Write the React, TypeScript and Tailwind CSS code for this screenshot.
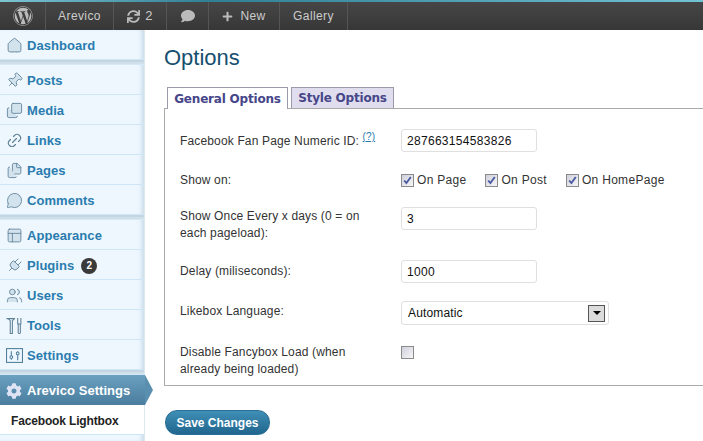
import React from 'react';
import { FaWordpress, FaSync, FaComment, FaPlus, FaCog } from 'react-icons/fa';
import { Home, Pin, Images, Link2, Files, MessageCircle, PanelsTopLeft, Plug, Users } from 'lucide-react';

const Tools: React.FC = () => (
    <svg width="17" height="17" viewBox="0 0 16 16" fill="none" stroke="#5f8197" strokeWidth="1">
        <path d="M0.5 1.5h8M2 1.5l2 2v12h2v-12l2-2" />
        <path d="M11 1v5M14 1v5M10.5 6.5h4M11.5 7v7.5a1 1 0 0 0 2 0V7" />
    </svg>
);

const SettingsIcon: React.FC = () => (
    <svg width="17" height="17" viewBox="0 0 16 16" fill="none" stroke="#4f7f9c" strokeWidth="1">
        <rect x="0.5" y="1.5" width="15" height="13" />
        <path d="M5 4v4.5M5 11v1M11 4v1M11 7.5v5" />
        <circle cx="5" cy="9.5" r="1.3" />
        <circle cx="11" cy="6" r="1.3" />
    </svg>
);

const iconProps = { size: 17, strokeWidth: 1.2, fill: '#d3e3ee' };

const menuGroups = [
    [{ label: 'Dashboard', icon: <Home {...iconProps} /> }],
    [
        { label: 'Posts', icon: <Pin {...iconProps} className="rotate-45" /> },
        { label: 'Media', icon: <Images {...iconProps} /> },
        { label: 'Links', icon: <Link2 size={17} strokeWidth={1.6} className="-rotate-45" /> },
        { label: 'Pages', icon: <Files {...iconProps} /> },
        { label: 'Comments', icon: <MessageCircle {...iconProps} /> },
    ],
    [
        { label: 'Appearance', icon: <PanelsTopLeft {...iconProps} /> },
        { label: 'Plugins', icon: <Plug {...iconProps} className="rotate-45" />, badge: '2' },
        { label: 'Users', icon: <Users {...iconProps} /> },
        { label: 'Tools', icon: <Tools /> },
        { label: 'Settings', icon: <SettingsIcon /> },
    ],
];

const Separator: React.FC = () => (
    <div className="h-[5px] border-t-2 border-b border-t-[#c3d6e2] border-b-[#d5e8f5] bg-[#cfe0eb]" />
);

const Checkbox: React.FC<{ checked?: boolean }> = ({ checked }) => (
    <span className="flex h-[13px] w-[13px] shrink-0 items-center justify-center border border-[#8a8a8a] bg-gradient-to-br from-[#d0d0dc] to-[#f6f6f8]">
        {checked && (
            <svg width="9" height="9" viewBox="0 0 9 9" fill="none" stroke="#4a5aa0" strokeWidth="1.8">
                <path d="M1.2 4.5l2.2 2.6L7.8 1" />
            </svg>
        )}
    </span>
);

const TextInput: React.FC<{ value: string }> = ({ value }) => (
    <div className="flex h-[23px] w-[136px] items-center rounded-[3px] border border-[#dfdfdf] bg-white pl-[5px] text-[12px] tracking-[0.3px] text-[#111]">
        {value}
    </div>
);

const Row: React.FC<{ label: React.ReactNode; className: string; labelClass?: string; children: React.ReactNode }> = ({ label, className, labelClass, children }) => (
    <div className={`flex ${className}`}>
        <div className={`w-[221px] shrink-0 pr-[12px] leading-[17px] text-[#333] ${labelClass ?? ''}`}>{label}</div>
        <div>{children}</div>
    </div>
);

export default function App() {
    return (
        <div className="h-[441px] w-[703px] overflow-hidden bg-white font-['Liberation_Sans',sans-serif] text-[12px] tracking-[0.15px]">
            {/* Admin bar */}
            <div className="h-[2px] bg-gradient-to-r from-[#7cc4d2] via-[#2f7f95] via-30% to-[#6fc3d3]" />
            <div className="h-[28px] bg-gradient-to-b from-[#464646] to-[#373737] text-[12px] tracking-[0.4px] text-[#cccccc]">
                <div className="flex h-full">
                    <div className="flex w-[46px] items-center justify-center border-r border-[#555]">
                        <FaWordpress size={20} className="text-[#bbb]" />
                    </div>
                    <div className="flex w-[68px] items-center justify-center border-r border-[#555]">Arevico</div>
                    <div className="flex w-[53px] items-center justify-center gap-[5px] border-r border-[#555]">
                        <FaSync size={13} className="text-[#bbb]" />
                        <span className="text-[13px]">2</span>
                    </div>
                    <div className="flex w-[42px] items-center justify-center border-r border-[#555]">
                        <FaComment size={14} className="text-[#bbb]" />
                    </div>
                    <div className="flex w-[71px] items-center justify-center gap-[7px] border-r border-[#555]">
                        <FaPlus size={11} className="text-[#bbb]" />
                        <span>New</span>
                    </div>
                    <div className="flex w-[68px] items-center justify-center border-r border-[#555]">Gallery</div>
                </div>
            </div>

            <div className="flex h-[411px]">
                {/* Sidebar */}
                <div className="w-[145px] shrink-0 border-r-[1px] border-[#dce8f0] bg-[#eef7fe] shadow-[inset_-4px_0_4px_-2px_rgba(170,195,215,0.6)]">
                    {menuGroups.map((group, i) => (
                        <div key={i}>
                            {group.map((item) => (
                                <div key={item.label} className="flex h-[30px] items-center gap-[4px] border-b border-[#cfe6f7] pl-[6px] pt-[2px] text-[13px] font-bold tracking-[0.05px] text-[#2a7cae]">
                                    <span className="flex w-[17px] justify-center text-[#5f8197]">{item.icon}</span>
                                    <span>{item.label}</span>
                                    {item.badge && (
                                        <span className="ml-[3px] flex h-[16px] w-[16px] items-center justify-center rounded-full bg-[#3a3a3a] text-[10px] text-white">
                                            {item.badge}
                                        </span>
                                    )}
                                </div>
                            ))}
                            <Separator />
                        </div>
                    ))}
                    <div className="relative flex h-[30px] w-[145px] items-center gap-[5px] bg-gradient-to-b from-[#6aa0c0] to-[#4a7d9e] pl-[6px] pt-[2px] text-[13px] font-bold tracking-[0.05px] text-white">
                        <FaCog size={16} className="text-[#dfe4f5]" />
                        <span>Arevico Settings</span>
                        <span className="absolute left-[145px] top-0 h-0 w-0 border-y-[15px] border-l-[8px] border-y-transparent border-l-[#5a8fb0]" />
                    </div>
                    <div className="flex h-[30px] items-center border-b border-[#cfe6f7] bg-white pl-[11px] pt-[2px] text-[12px] font-bold tracking-[-0.15px] text-[#222]">Facebook Lightbox</div>
                </div>

                {/* Content */}
                <div className="min-w-0 flex-1 pl-[19px]">
                    <h2 className="pt-[13px] text-[22px] leading-[30px] tracking-normal text-[#164f6f]">Options</h2>
                    <div className="mt-[14px] flex h-[21px] items-end gap-[3px] pl-[3px] font-['DejaVu_Sans',sans-serif] text-[12px] font-bold tracking-[-0.2px] text-[#464689]">
                        <div className="relative z-10 -mb-px flex h-[22px] w-[121px] items-center justify-center border border-b-0 border-[#9a9aa8] bg-white">General Options</div>
                        <div className="flex h-[21px] w-[103px] items-center justify-center border border-b-0 border-[#9a9aa8] bg-[#e0deee]">Style Options</div>
                    </div>
                    <div className="h-[278px] border-y border-l border-[#aaaaaa] pl-[15px] pt-[20px]">
                        <Row label={<>Facebook Fan Page Numeric ID: <sup className="text-[10px] leading-none text-[#2a7cae] underline">(?)</sup></>} className="h-[43px]" labelClass="pt-[4px]">
                            <TextInput value="287663154583826" />
                        </Row>
                        <Row label="Show on:" className="h-[35px]">
                            <div className="flex gap-[19px]">
                                {['On Page', 'On Post', 'On HomePage'].map((t) => (
                                    <span key={t} className="flex items-center gap-[3px] leading-[17px] tracking-[0.3px] text-[#333]">
                                        <Checkbox checked />
                                        {t}
                                    </span>
                                ))}
                            </div>
                        </Row>
                        <Row label="Show Once Every x days (0 = on each pageload):" className="h-[53px]" labelClass="pt-[1px]">
                            <TextInput value="3" />
                        </Row>
                        <Row label="Delay (miliseconds):" className="h-[41px]" labelClass="pt-[3px]">
                            <TextInput value="1000" />
                        </Row>
                        <Row label="Likebox Language:" className="h-[43px]" labelClass="pt-[2px]">
                            <div className="flex h-[24px] w-[208px] items-center justify-between rounded-[3px] border border-[#dfdfdf] bg-white pl-[6px] pr-[3px] text-[#111]">
                                Automatic
                                <span className="flex h-[17px] w-[17px] items-center justify-center border border-[#555] bg-[#dcdcdc]">
                                    <span className="h-0 w-0 border-x-[4px] border-t-[4px] border-x-transparent border-t-black" />
                                </span>
                            </div>
                        </Row>
                        <Row label="Disable Fancybox Load (when already being loaded)" className="h-[40px]">
                            <div className="pt-[2px]"><Checkbox /></div>
                        </Row>
                    </div>
                    <button className="ml-[1px] mt-[24px] h-[25px] w-[105px] rounded-[12px] border border-[#2a6f96] bg-gradient-to-b from-[#3f8fb6] to-[#21668e] text-[12px] font-bold tracking-normal text-white">Save Changes</button>
                </div>
            </div>
        </div>
    );
}
